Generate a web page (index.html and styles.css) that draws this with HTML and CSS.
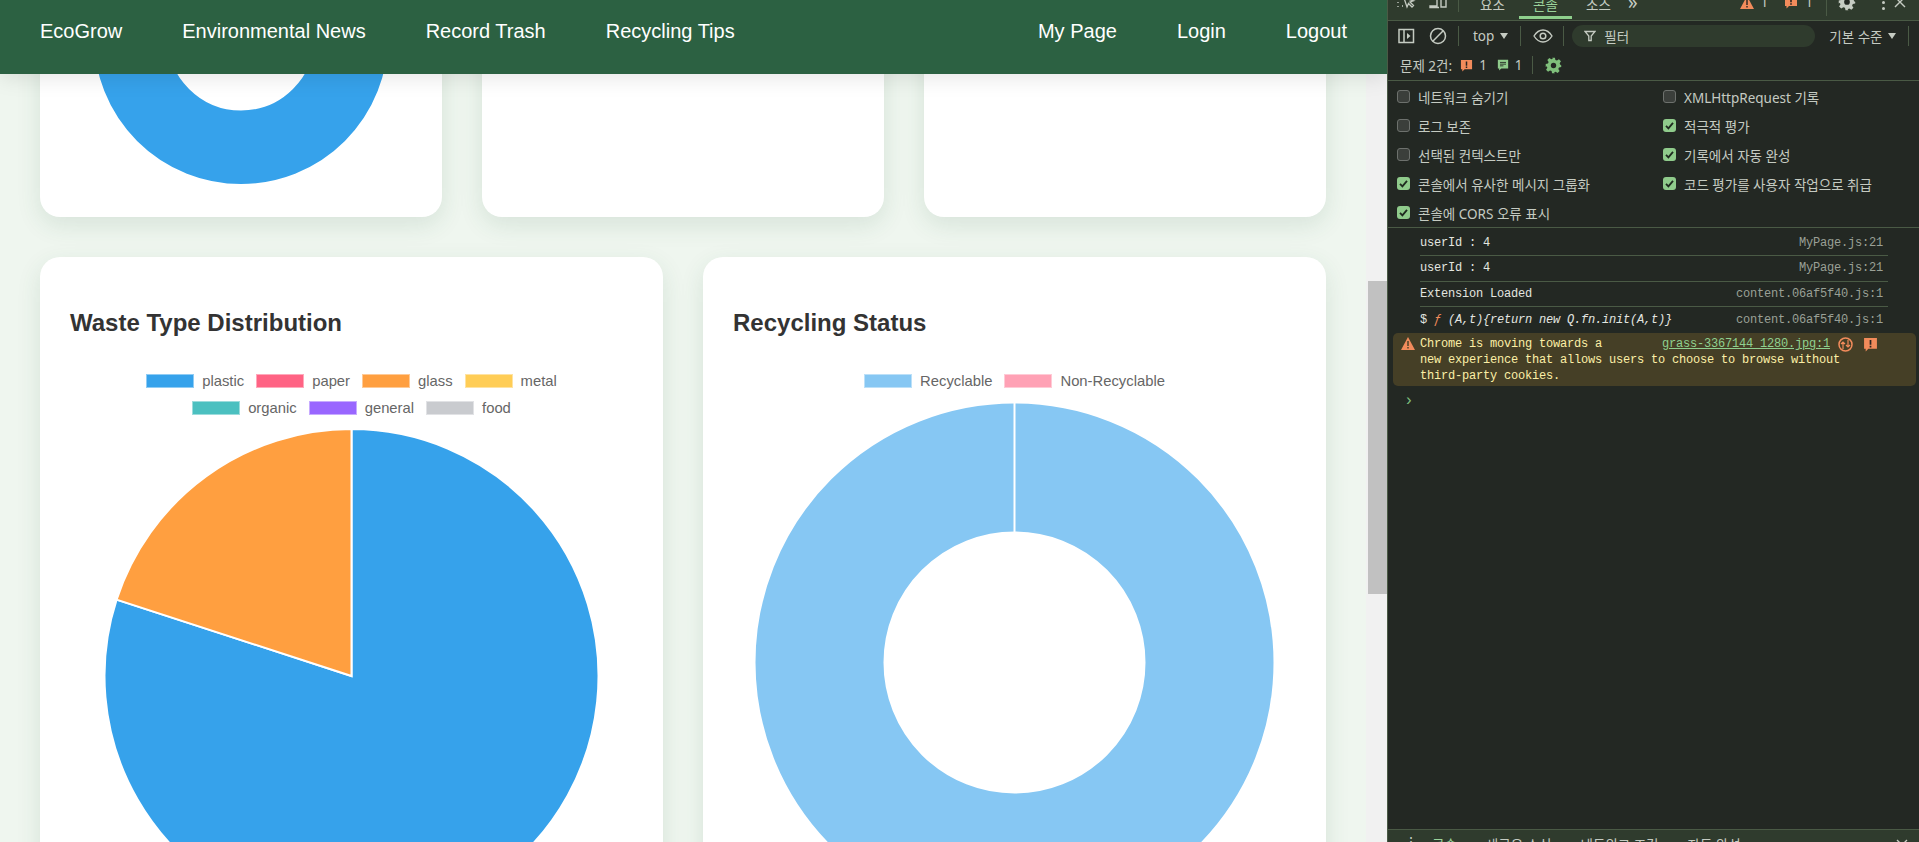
FILE: index.html
```html
<!DOCTYPE html>
<html lang="ko">
<head>
<meta charset="utf-8">
<title>EcoGrow</title>
<link rel="stylesheet" href="styles.css">
</head>
<body>
<svg class="defs" width="0" height="0" aria-hidden="true">
  <symbol id="check" viewBox="0 0 13 13"><path d="M3 6.8l2.4 2.5L10 3.8" fill="none" stroke="#1f2a1f" stroke-width="1.8"/></symbol>
  <symbol id="issue" viewBox="0 0 14 14"><path d="M1 1h12v10H5l-2.5 2.5V11H1z" fill="#f28b5b"/><path d="M6.2 2.8h1.6v4.4H6.200zM6.200 8.200h1.600v1.500H6.200z" fill="#2a2420"/></symbol>
  <symbol id="gear" viewBox="0 0 24 24"><path d="M10 1h4l.7 3.200 2.200.9 2.800-1.800 2.800 2.800-1.800 2.800.9 2.200L23 12l-.1 2-3.200.7-.9 2.200 1.800 2.800-2.800 2.800-2.800-1.800-2.200.9L14 23h-4l-.7-3.200-2.200-.9-2.800 1.800-2.800-2.800 1.800-2.800-.9-2.200L1 14v-4l3.200-.7.9-2.200-1.800-2.800 2.800-2.800 2.800 1.800 2.200-.9z" fill="currentColor"/><circle cx="12" cy="12" r="3.800" fill="#232823"/></symbol>
</svg>

<div class="viewport">
  <div class="page">
    <main class="content">
      <div class="row-three">
        <section class="card card-short">
          <svg class="chart-top" width="402" height="317" viewBox="0 0 402 317"><circle cx="201" cy="137" r="110.250" fill="none" stroke="#36a2eb" stroke-width="73.500"/></svg>
        </section>
        <section class="card card-short"></section>
        <section class="card card-short"></section>
      </div>
      <div class="row-two">
        <section class="card card-tall">
          <h2 class="card-title">Waste Type Distribution</h2>
          <div class="legend">
            <div class="legend-row">
              <span class="legend-item"><i class="swatch sw-plastic"></i>plastic</span>
              <span class="legend-item"><i class="swatch sw-paper"></i>paper</span>
              <span class="legend-item"><i class="swatch sw-glass"></i>glass</span>
              <span class="legend-item"><i class="swatch sw-metal"></i>metal</span>
            </div>
            <div class="legend-row">
              <span class="legend-item"><i class="swatch sw-organic"></i>organic</span>
              <span class="legend-item"><i class="swatch sw-general"></i>general</span>
              <span class="legend-item"><i class="swatch sw-food"></i>food</span>
            </div>
          </div>
          <svg class="chart" width="563" height="540" viewBox="0 0 563 540">
            <path d="M281.500 248V1A247 247 0 1 1 46.590 171.670Z" fill="#36a2eb" stroke="#fff" stroke-width="2"/>
            <path d="M281.500 248L46.590 171.670A247 247 0 0 1 281.500 1Z" fill="#ff9f40" stroke="#fff" stroke-width="2"/>
          </svg>
        </section>
        <section class="card card-tall">
          <h2 class="card-title">Recycling Status</h2>
          <div class="legend">
            <div class="legend-row">
              <span class="legend-item"><i class="swatch sw-recyc"></i>Recyclable</span>
              <span class="legend-item"><i class="swatch sw-nonrecyc"></i>Non-Recyclable</span>
            </div>
          </div>
          <svg class="chart" width="563" height="540" viewBox="0 0 563 540">
            <circle cx="281.500" cy="261.500" r="195" fill="none" stroke="#86c7f3" stroke-width="128"/>
            <path d="M281.500 0V132" stroke="#fff" stroke-width="2"/>
          </svg>
        </section>
      </div>
    </main>
    <div class="scrollbar"><div class="thumb"></div></div>
  </div>
  <nav class="navbar">
    <div class="nav-group">
      <a>EcoGrow</a><a>Environmental News</a><a>Record Trash</a><a>Recycling Tips</a>
    </div>
    <div class="nav-group">
      <a>My Page</a><a>Login</a><a>Logout</a>
    </div>
  </nav>
</div>

<aside class="devtools">
  <div class="tabbar">
    <span class="slot s-inspect"><svg width="22" height="22" viewBox="0 0 22 22"><path d="M3 3v1M3 7v1M3 11v1M3 15v1M7 15h1M7 3h1M11 3h1M15 3h1" stroke="currentColor" stroke-width="1.400"/><path d="M9 7l3 9 1.500-3.500L17 16l1.500-1.500-3.500-3.500 3.500-1.200z" fill="none" stroke="currentColor" stroke-width="1.300"/></svg></span>
    <span class="slot s-device"><svg width="22" height="22" viewBox="0 0 22 22"><path d="M4 3h6v12H3v1.500h9M14 7h5v9h-5z" fill="none" stroke="currentColor" stroke-width="1.400"/></svg></span>
    <span class="vline vl-tab"></span>
    <span class="tab">요소</span>
    <span class="tab tab-active">콘솔</span>
    <span class="tab">소스</span>
    <span class="more">»</span>
    <span class="counts">
      <svg width="14" height="13" viewBox="0 0 14 13"><path d="M7 0l7 13H0z" fill="#f28b5b"/><path d="M6.300 4h1.400v5H6.300zM6.300 10h1.400v1.500H6.300z" fill="#2a2420"/></svg><b>1</b>
      <svg class="c-gap" width="14" height="14"><use href="#issue"/></svg><b>1</b>
    </span>
    <span class="vline vl-right"></span>
    <svg class="tb-gear" width="18" height="18"><use href="#gear"/></svg>
    <span class="kebab"><i></i><i></i><i></i></span>
    <svg class="tb-close" width="12" height="12" viewBox="0 0 12 12"><path d="M1 1l10 10M11 1L1 11" stroke="currentColor" stroke-width="1.400"/></svg>
  </div>

  <div class="toolbar">
    <span class="slot s-inspect"><svg width="18" height="18" viewBox="0 0 18 18"><path d="M2 2.500h14.500v13H2zM7 2.500v13" fill="none" stroke="currentColor" stroke-width="1.500"/><path d="M10 6l3.500 3L10 12z" fill="currentColor"/></svg></span>
    <span class="slot s-device"><svg width="18" height="18" viewBox="0 0 18 18"><circle cx="9" cy="9" r="7.500" fill="none" stroke="currentColor" stroke-width="1.500"/><path d="M3.800 14.200L14.200 3.800" stroke="currentColor" stroke-width="1.500"/></svg></span>
    <span class="vline vl-tab"></span>
    <span class="top-label">top</span>
    <span class="caret"></span>
    <span class="vline vl-a"></span>
    <svg class="eye" width="20" height="14" viewBox="0 0 20 14"><path d="M1 7c2.500-4 5.500-6 9-6s6.500 2 9 6c-2.500 4-5.500 6-9 6S3.500 11 1 7z" fill="none" stroke="currentColor" stroke-width="1.400"/><circle cx="10" cy="7" r="2.800" fill="none" stroke="currentColor" stroke-width="1.500"/></svg>
    <span class="vline vl-b"></span>
    <div class="filter">
      <svg width="12" height="12" viewBox="0 0 12 12"><path d="M1 1.500h10L7.200 6v4.500H4.800V6z" fill="none" stroke="currentColor" stroke-width="1.300"/></svg>
      <span>필터</span>
    </div>
    <span class="level">기본 수준</span>
    <span class="caret caret-level"></span>
    <span class="vline vl-end"></span>
  </div>

  <div class="issues">
    <span>문제 2건:</span>
    <svg class="i-red" width="13" height="13"><use href="#issue"/></svg><b>1</b>
    <svg class="i-green" width="12" height="12" viewBox="0 0 14 14"><path d="M1 1h12v10H5l-2.500 2.500V11H1z" fill="#8fcb8b"/><path d="M3.500 4h7M3.500 6h7M3.500 8h4" stroke="#232823"/></svg><b>1</b>
    <span class="vline vl-iss"></span>
    <svg class="i-gear" width="17" height="17"><use href="#gear"/></svg>
  </div>

  <div class="settings">
    <label class="opt"><span class="box"></span>네트워크 숨기기</label>
    <label class="opt"><span class="box"></span>XMLHttpRequest 기록</label>
    <label class="opt"><span class="box"></span>로그 보존</label>
    <label class="opt"><span class="box box-on"><svg width="13" height="13"><use href="#check"/></svg></span>적극적 평가</label>
    <label class="opt"><span class="box"></span>선택된 컨텍스트만</label>
    <label class="opt"><span class="box box-on"><svg width="13" height="13"><use href="#check"/></svg></span>기록에서 자동 완성</label>
    <label class="opt"><span class="box box-on"><svg width="13" height="13"><use href="#check"/></svg></span>콘솔에서 유사한 메시지 그룹화</label>
    <label class="opt"><span class="box box-on"><svg width="13" height="13"><use href="#check"/></svg></span>코드 평가를 사용자 작업으로 취급</label>
    <label class="opt"><span class="box box-on"><svg width="13" height="13"><use href="#check"/></svg></span>콘솔에 CORS 오류 표시</label>
  </div>

  <div class="console">
    <div class="log"><span>userId : 4</span><span class="src">MyPage.js:21</span></div>
    <div class="log"><span>userId : 4</span><span class="src">MyPage.js:21</span></div>
    <div class="log"><span>Extension Loaded</span><span class="src">content.06af5f40.js:1</span></div>
    <div class="log log-last"><span>$ <em class="fn">ƒ</em> <em>(A,t){return new Q.fn.init(A,t)}</em></span><span class="src">content.06af5f40.js:1</span></div>
    <div class="warn">
      <svg class="warn-ico" width="14" height="13" viewBox="0 0 14 13"><path d="M7 0l7 13H0z" fill="#f28b5b"/><path d="M6.300 4h1.400v5H6.300zM6.300 10h1.400v1.500H6.300z" fill="#453f26"/></svg>
      <div class="warn-text">
        <span class="warn-side">
          <a>grass-3367144_1280.jpg:1</a>
          <svg class="w-circle" width="15" height="15" viewBox="0 0 15 15"><circle cx="7.500" cy="7.500" r="6.500" fill="none" stroke="#f28b5b" stroke-width="1.500"/><path d="M5 12V5M3 7l2-2 2 2M10 3v7M8 8l2 2 2-2" fill="none" stroke="#f28b5b" stroke-width="1.200"/></svg>
          <svg class="w-issue" width="15" height="15"><use href="#issue"/></svg>
        </span>
        Chrome is moving towards a new experience that allows users to choose to browse without third-party cookies.
      </div>
    </div>
    <div class="prompt">›</div>
  </div>

  <div class="drawer">
    <span class="d-dot">⋮</span>
    <span class="d-tab d-active">콘솔</span>
    <span class="d-tab">새로운 소식</span>
    <span class="d-tab">네트워크 조건</span>
    <span class="d-tab">자동 완성</span>
    <svg class="d-close" width="12" height="12" viewBox="0 0 12 12"><path d="M1 1l10 10M11 1L1 11" stroke="currentColor" stroke-width="1.400"/></svg>
  </div>
</aside>
</body>
</html>
```
FILE: styles.css
```css
* { box-sizing: border-box; }
html, body { margin: 0; height: 100%; overflow: hidden; }
body { display: flex; width: 1919px; height: 842px; font-family: "Liberation Sans", Arial, sans-serif; background: #eff6ef; }
.defs { position: absolute; }

/* page */
.viewport { position: relative; width: 1387px; height: 842px; overflow: hidden; flex: none; }
.page { display: flex; height: 100%; }
.content { width: 1366px; padding: 0 40px; margin-top: -100px; flex: none; background: #eff6ef; display: flex; flex-direction: column; gap: 40px; height: 1000px; }
.scrollbar { width: 21px; height: 842px; background: #f1f1f1; padding: 281px 0 0 1.5px; flex: none; }
.thumb { height: 313px; background: #c1c1c1; }

.navbar { position: absolute; top: 0; left: 0; right: 0; height: 74px; background: #2c6142; padding: 20px 40px 0; display: flex; justify-content: space-between; box-shadow: 0 4px 20px rgba(0,0,0,.1); font-size: 20px; line-height: 23px; color: #fff; }
.nav-group { display: flex; gap: 60px; }

.row-three { display: grid; grid-template-columns: repeat(3, 402px); gap: 40px; }
.row-two { display: grid; grid-template-columns: repeat(2, 623px); gap: 40px; }
.card { background: #fff; border-radius: 20px; box-shadow: 0 8px 24px rgba(44,97,66,.12); }
.card-short { height: 317px; overflow: hidden; }
.card-tall { height: 640px; padding: 52px 30px 0; }
.chart-top, .chart { display: block; }
.chart { margin-top: 6px; }
.card-title { margin: 0; font-size: 24px; line-height: 28px; font-weight: 700; color: #333; }

.legend { margin-top: 30px; font-size: 14.800px; color: #666; }
.legend-row { display: flex; justify-content: center; gap: 12px; height: 27.500px; align-items: center; }
.legend-item { display: flex; align-items: center; gap: 8px; }
.swatch { display: block; width: 48px; height: 14px; border: 1px solid rgba(255,255,255,.45); }
.sw-plastic { background: #36a2eb; }
.sw-paper { background: #ff6384; }
.sw-glass { background: #ff9f40; }
.sw-metal { background: #ffcd56; }
.sw-organic { background: #4bc0c0; }
.sw-general { background: #9966ff; }
.sw-food { background: #c9cbcf; }
.sw-recyc { background: #86c7f3; }
.sw-nonrecyc { background: #ffa1b5; }

/* devtools */
.devtools { width: 532px; height: 842px; flex: none; background: #232823; border-left: 1px solid #4a5a45; color: #c5cbc2; font-family: "Noto Sans", "Noto Sans CJK KR", sans-serif; font-size: 13.500px; overflow: hidden; display: flex; flex-direction: column; }
.tabbar { height: 21px; flex: none; background: #2f3b2d; border-bottom: 1px solid #4a5a45; display: flex; align-items: center; overflow: hidden; padding-left: 2px; }
.tabbar > * { position: relative; top: -8px; }
.slot { display: flex; justify-content: center; align-items: center; flex: none; }
.s-inspect { width: 32px; }
.s-device { width: 32px; }
.vline { display: block; width: 1px; height: 20px; background: #4a5a45; flex: none; }
.vl-tab { margin: 0 7px 0 4px; }
.tab { width: 53px; height: 34px; line-height: 30px; text-align: center; flex: none; }
.tabbar > .tab { top: -1px; height: 20px; line-height: 12px; }
.tab-active { color: #9bd39b; border-bottom: 3px solid #8ecf8c; }
.more { margin-left: 3px; font-size: 19px; }
.counts { margin-left: auto; display: flex; align-items: center; gap: 7px; }
.counts b { font-weight: 400; }
.c-gap { margin-left: 9px; }
.vl-right { margin: 0 11px 0 13px; top: -4px !important; }
.tb-gear { color: #c5cbc2; }
.kebab { width: 26px; margin-left: 14px; display: flex; flex-direction: column; align-items: center; gap: 3px; }
.kebab i { display: block; width: 3px; height: 3px; border-radius: 50%; background: #c5cbc2; }
.tb-close { margin: 0 13px 0 -2px; }

.toolbar { height: 30px; flex: none; display: flex; align-items: center; padding-left: 2px; }
.top-label { margin-left: 7px; }
.caret { width: 0; height: 0; border: 4.500px solid transparent; border-top: 6px solid #c5cbc2; border-bottom: 0; flex: none; }
.toolbar .top-label + .caret { margin-left: 6px; }
.vl-a { margin: 0 12px 0 12px; }
.eye { flex: none; }
.vl-b { margin: 0 8px 0 10px; }
.filter { width: 243px; height: 22px; border-radius: 11px; background: #2f3b2d; display: flex; align-items: center; gap: 8px; padding-left: 12px; flex: none; }
.level { margin-left: 14px; flex: none; }
.caret-level { margin-left: 5px; }
.vl-end { margin-left: 12px; }

.issues { height: 30px; flex: none; border-bottom: 1px solid #4a5a45; display: flex; align-items: center; padding: 0 0 1px 12px; }
.issues b { font-weight: 400; margin-left: 6px; }
.i-red { margin-left: 8px; }
.i-green { margin-left: 10px; }
.vl-iss { margin: 0 12px 0 9px; height: 18px; }
.i-gear { color: #7fbf7b; }

.settings { flex: none; height: 147px; padding-top: 1px; padding-left: 9px; border-bottom: 1px solid #4a5a45; display: grid; grid-template-columns: 266px 1fr; grid-auto-rows: 29px; }
.opt { display: flex; align-items: center; gap: 8px; white-space: nowrap; }
.box { width: 13px; height: 13px; border-radius: 3px; background: #3b3f3b; border: 1px solid #6d716d; flex: none; }
.box-on { background: #8fcb8b; border: 0; }
.box svg { display: block; }

.console { flex: 1; font-family: "Liberation Mono", monospace; font-size: 12px; letter-spacing: -.2px; padding-top: 3px; min-height: 0; }
.log { height: 25.330px; margin: 0 31px 0 32px; padding-right: 5px; border-bottom: 1px solid #4a5a45; display: flex; justify-content: space-between; align-items: center; color: #e3e6e0; }
.log-last { border-bottom: 0; }
.src { color: #9aa096; }
.fn { color: #f28b5b; }
.warn { margin: 1px 3px 0 5px; height: 53px; background: #453f26; border-radius: 5px; display: flex; padding: 3px 0 0 8px; color: #fcefa6; line-height: 16px; }
.warn-ico { margin-top: 1px; flex: none; }
.warn-text { margin-left: 5px; width: 450px; }
.warn-side { float: right; display: flex; align-items: center; margin-right: -8px; margin-left: 36px; }
.warn-side a { color: #8fd08f; text-decoration: underline; margin-right: 8px; }
.w-issue { margin-left: 10px; }
.prompt { margin: 6px 0 0 16px; color: #7fbf7b; font-size: 16px; line-height: 18px; }

.drawer { flex: none; height: 13px; background: #2f3b2d; border-top: 1px solid #4a5a45; display: flex; align-items: flex-start; padding: 5px 0 0 16px; line-height: 20px; white-space: nowrap; overflow: visible; }
.d-dot { width: 14px; margin-top: -3px; }
.d-tab { margin-left: 29px; }
.d-tab:nth-of-type(2) { margin-left: 14px; }
.d-active { color: #9bd39b; }
.d-close { margin-left: auto; margin-right: 11px; margin-top: 4px; flex: none; }
```
